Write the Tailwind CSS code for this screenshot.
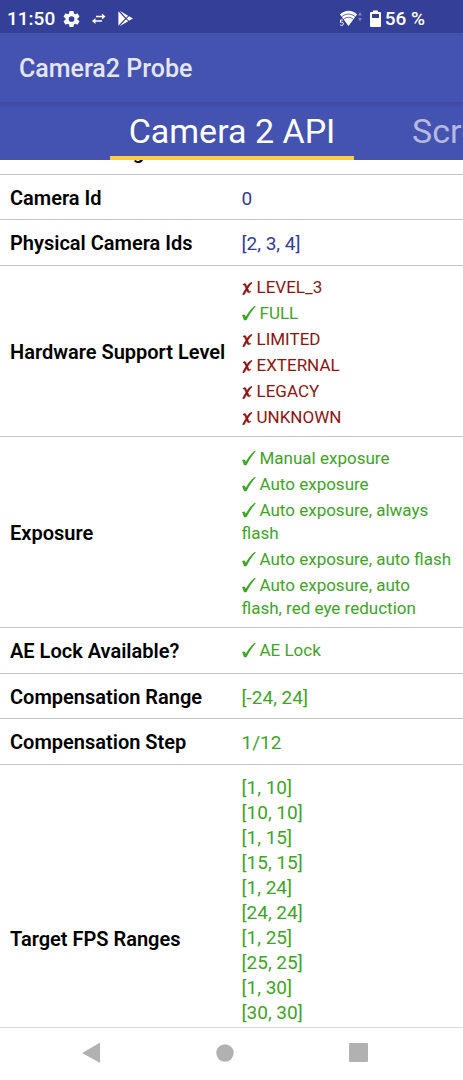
<!DOCTYPE html>
<html lang="en">
<head>
<meta charset="utf-8">
<meta name="viewport" content="width=device-width, initial-scale=1">
<title>Camera2 Probe</title>
<script src="https://cdn.jsdelivr.net/npm/@tailwindcss/browser@4"></script>
</head>
<body class="flex h-screen flex-col overflow-hidden bg-white font-[Roboto,sans-serif] text-black">
<svg class="hidden">
  <symbol id="yes" viewBox="0 0 14 15"><path d="M.3 9.200c1.100-1.200 2.500-1 3 .2l.5 1.300C6.300 6.600 8.600 3 12.300.3c.8-.6 1.900-.3 1.100.5C10 4.800 7.300 8.800 4.900 13.400c-.5.9-2.800 1.400-3.100.4L1 11.200C.7 10.200.500 10.100 0 10z"/></symbol>
  <symbol id="no" viewBox="0 0 11 13"><path stroke="currentColor" stroke-width=".4" d="M1.200 2.200c1.100-1.200 2.300-1 2.800.3l.9 2.100C6.200 2.600 7.500 1.300 9 .5c.7-.4 1.500.1.900.7C8.300 2.700 7 4.400 5.900 6.600l.9 2.100c.3.700.8.900 1.500.5.500-.2.800.1.500.5-1.200 1.500-3 1.500-3.600.1l-.5-1.300C3.900 9.800 3.200 11 2.600 12.200c-.5.9-2.400 1-1.800-.3C1.700 10 2.700 8.200 3.800 6.500L2.700 3.800C2.400 3 2 2.800 1.300 2.900c-.4 0-.4-.3-.1-.7z"/></symbol>
</svg>

<header class="shrink-0 bg-[#4452b0] text-white">
  <div class="flex h-[33px] items-center bg-[#343f98] pt-1 pl-[7px] pr-[38px] text-[19px] leading-6 font-medium">
    <span>11:50</span>
    <svg class="ml-2 size-[18px]" viewBox="0 0 24 24" fill="currentColor"><path d="M19.400 13c.04-.3.060-.7.060-1s-.02-.7-.07-1l2.300-1.700a.6.600 0 0 0 .1-.7l-2.200-3.800a.6.600 0 0 0-.7-.2l-2.700 1.100a8 8 0 0 0-1.700-1L14.100 1.800a.6.600 0 0 0-.6-.5h-4.300a.6.600 0 0 0-.6.500l-.4 2.900a8 8 0 0 0-1.700 1L3.800 4.600a.6.600 0 0 0-.7.2L.9 8.600a.6.600 0 0 0 .1.700L3.300 11a8 8 0 0 0 0 2L1 14.700a.6.600 0 0 0-.1.700l2.200 3.800c.1.200.4.300.7.200l2.700-1.100a8 8 0 0 0 1.700 1l.4 2.900c0 .3.300.5.600.5h4.300c.3 0 .6-.2.600-.5l.4-2.900a8 8 0 0 0 1.700-1l2.700 1.100c.3.100.6 0 .7-.2l2.200-3.800a.6.600 0 0 0-.1-.7zM11.400 15.800a3.800 3.800 0 1 1 0-7.600 3.800 3.800 0 0 1 0 7.600z"/></svg>
    <svg class="ml-[10px] h-[14px] w-[16px]" viewBox="0 0 16 14" fill="none" stroke="currentColor" stroke-width="1.400"><path d="M5 4.500h7M3 9h8"/><path d="M11 1.500l3.500 3L11 7.500zM4.500 6L1 9l3.500 3z" fill="currentColor" stroke="none"/></svg>
    <svg class="ml-[10px] h-[17px] w-[17px]" viewBox="0 0 16 16" fill="currentColor"><path d="M1.300 1.200v13.600L7.600 8zM2.500.8l8 4.500-2 2.100zM2.500 15.200l8-4.500-2-2.100zM11.300 5.800l3.700 2.200-3.700 2.200L9.200 8z"/></svg>
    <svg class="ml-auto h-[18px] w-[24px]" viewBox="0 0 24 18"><path d="M2 4.500C7-.5 14.500-.5 19 4.500L10.500 16z" fill="#fff"/><path d="M3.500 6.900c4.200-3.700 9.800-3.700 14 0M5.500 9.300c3-2.600 7-2.600 10 0" fill="none" stroke="#343f98" stroke-width=".8"/><path d="M0 9h6v7H0z" fill="#343f98"/><path d="M5 10H2.500v2.400c2-.6 2.900.2 2.900 1.400 0 1.700-2 2-3.200 1.100" fill="none" stroke="#fff"/><path d="M20 5.500L22 2l2 3.500zM20 8l2 3.500L24 8z" fill="#7e85bd"/></svg>
    <svg class="ml-2 h-[17px] w-[11px]" viewBox="0 0 11 17"><path d="M3 .5h5V2h2q1 0 1 1v13q0 1-1 1H1q-1 0-1-1V3q0-1 1-1h2z" fill="#fff"/><path d="M2 4h7v4H2z" fill="#343f98"/></svg>
    <span class="ml-[4px]">56 %</span>
  </div>
  <h1 class="flex h-[69px] items-center pl-[19px] pt-[3px] text-[25px] font-medium text-[#e3e5f3]">Camera2 Probe</h1>
  <nav class="flex h-[58px] overflow-hidden bg-linear-to-b from-[#3e4aa2] to-[#4452b0] to-10% pl-[110px] text-[34px] leading-[58px] whitespace-nowrap">
    <a href="#camera" class="h-full w-[244px] shrink-0 border-b-4 border-[#fbcb3d] text-center" aria-current="page">Camera 2 API</a>
    <a href="#screen" class="ml-[58px] text-[#b4badf]">Screen</a>
  </nav>
</header>

<main id="camera" class="min-h-0 flex-1 overflow-hidden">
  <table class="-mt-[32px] w-full table-fixed border-collapse text-left text-[19px] leading-[25px] text-[#3ea526] [&_th]:w-1/2 [&_th]:pl-[10px] [&_th]:pt-[3px] [&_th]:align-middle [&_th]:text-[20px] [&_th]:font-semibold [&_th]:text-black [&_td]:pl-[10px] [&_td]:pr-[10px] [&_tr]:border-b [&_tr]:border-[#c4c4c4]">
    <tr class="h-[46px]"><th scope="row">Camera Facing</th><td></td></tr>
    <tr class="h-[45px]"><th scope="row">Camera Id</th><td class="pt-[3px] text-[#303c9b]">0</td></tr>
    <tr class="h-[46px]"><th scope="row">Physical Camera Ids</th><td class="pt-[3px] text-[#303c9b]">[2, 3, 4]</td></tr>
    <tr class="h-[171px]"><th scope="row">Hardware Support Level</th>
      <td class="text-[17px] leading-[23px] text-[#8f1410] [&_li]:pt-[3px]"><ul>
        <li><svg class="mr-[4px] inline h-[13px] w-[11px] fill-current align-[-2px]"><use href="#no"/></svg>LEVEL_3</li>
        <li class="text-[#3ea526]"><svg class="mr-[4px] inline h-[15px] w-[14px] fill-current align-[-2px]"><use href="#yes"/></svg>FULL</li>
        <li><svg class="mr-[4px] inline h-[13px] w-[11px] fill-current align-[-2px]"><use href="#no"/></svg>LIMITED</li>
        <li><svg class="mr-[4px] inline h-[13px] w-[11px] fill-current align-[-2px]"><use href="#no"/></svg>EXTERNAL</li>
        <li><svg class="mr-[4px] inline h-[13px] w-[11px] fill-current align-[-2px]"><use href="#no"/></svg>LEGACY</li>
        <li><svg class="mr-[4px] inline h-[13px] w-[11px] fill-current align-[-2px]"><use href="#no"/></svg>UNKNOWN</li>
      </ul></td></tr>
    <tr class="h-[191px]"><th scope="row">Exposure</th>
      <td class="text-[17px] leading-[23px] [&_li]:pt-[3px]"><ul>
        <li><svg class="mr-[4px] inline h-[15px] w-[14px] fill-current align-[-2px]"><use href="#yes"/></svg>Manual exposure</li>
        <li><svg class="mr-[4px] inline h-[15px] w-[14px] fill-current align-[-2px]"><use href="#yes"/></svg>Auto exposure</li>
        <li><svg class="mr-[4px] inline h-[15px] w-[14px] fill-current align-[-2px]"><use href="#yes"/></svg>Auto exposure, always flash</li>
        <li><svg class="mr-[4px] inline h-[15px] w-[14px] fill-current align-[-2px]"><use href="#yes"/></svg>Auto exposure, auto flash</li>
        <li><svg class="mr-[4px] inline h-[15px] w-[14px] fill-current align-[-2px]"><use href="#yes"/></svg>Auto exposure, auto flash, red eye reduction</li>
      </ul></td></tr>
    <tr class="h-[46px]"><th scope="row">AE Lock Available?</th><td class="text-[17px] leading-[23px]"><svg class="mr-[4px] inline h-[15px] w-[14px] fill-current align-[-2px]"><use href="#yes"/></svg>AE Lock</td></tr>
    <tr class="h-[45px]"><th scope="row">Compensation Range</th><td class="pt-[3px]">[-24, 24]</td></tr>
    <tr class="h-[46px]"><th scope="row">Compensation Step</th><td class="pt-[3px]">1/12</td></tr>
    <tr class="h-[347px]"><th scope="row">Target FPS Ranges</th>
      <td class="pt-[10px] align-top"><ul><li>[1, 10]</li><li>[10, 10]</li><li>[1, 15]</li><li>[15, 15]</li><li>[1, 24]</li><li>[24, 24]</li><li>[1, 25]</li><li>[25, 25]</li><li>[1, 30]</li><li>[30, 30]</li></ul></td></tr>
  </table>
</main>

<footer class="grid h-[53px] shrink-0 grid-cols-[100px_1fr_1fr_95px] border-t border-[#d8d8d8] bg-white pb-[3px] text-[#b1b1b1]">
  <button aria-label="Back" class="flex items-center justify-end"><svg class="size-5" viewBox="0 0 20 20" fill="currentColor"><path d="M20 .4v18.800q0 .8-.8.4L3 10.500q-.8-.5 0-1L19.200.1q.8-.4.800.3z"/></svg></button>
  <button aria-label="Home" class="flex items-center justify-end"><svg class="size-[18px]" viewBox="0 0 18 18" fill="currentColor"><circle cx="9" cy="9" r="8.700"/></svg></button>
  <button aria-label="Recent apps" class="flex items-center justify-end"><svg class="size-[19px]" viewBox="0 0 19 19" fill="currentColor"><rect width="19" height="19" rx="1"/></svg></button>
</footer>
</body>
</html>
